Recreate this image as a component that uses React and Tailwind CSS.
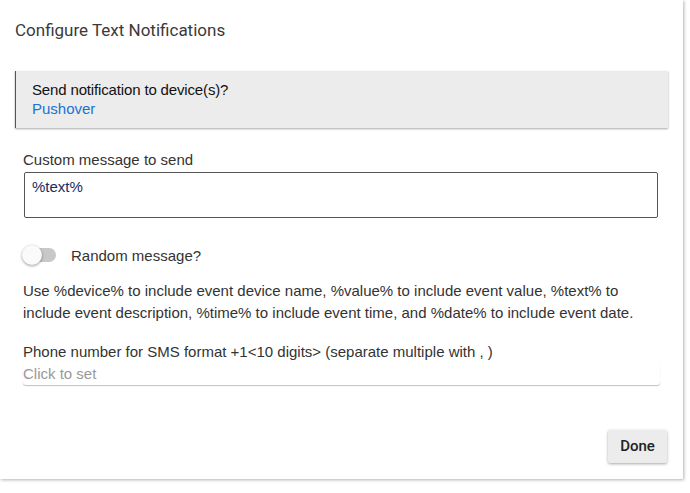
export default function App() {
  return (
    <div className="w-[690px] h-[493px] bg-white">
      <div className="w-[683px] h-[479px] bg-white shadow-[1px_1px_3px_rgba(0,0,0,0.3)] flex flex-col font-['Liberation_Sans',Arial,sans-serif]">
        <div className="pt-[20px] pl-[15px] h-[71px] font-['Roboto',sans-serif] text-[17px] text-[#3a3a3a] leading-[21px]">
          Configure Text Notifications
        </div>
        <div className="ml-[15px] w-[653px] h-[57px] bg-[#ececec] border-l border-l-[#555] shadow-[0_1px_2px_rgba(0,0,0,0.35)] pl-[16px] pt-[9px] text-[15px] leading-[19px]">
          <div className="text-[#111] tracking-[-0.15px]">Send notification to device(s)?</div>
          <div className="text-[#1a73d0]">Pushover</div>
        </div>
        <div className="pl-[23px] pt-[22px] text-[15px] leading-[19px] text-[#333]">Custom message to send</div>
        <div className="ml-[24px] mt-[3px] w-[634px] h-[46px] border border-[#555] rounded-[2px] px-[7px] pt-[4px] text-[15px] leading-[19px] text-[#1c2a5e]">
          %text%
        </div>
        <div className="flex items-center pl-[22px] mt-[27px] h-[20px]">
          <div className="relative w-[34px] h-[20px] flex items-center">
            <div className="ml-[4px] w-[30px] h-[14px] rounded-full bg-[#c8c8c8]"></div>
            <div className="absolute left-0 top-0 w-[20px] h-[20px] rounded-full bg-[#fafafa] shadow-[0_1px_3px_rgba(0,0,0,0.4)]"></div>
          </div>
          <div className="ml-[15px] text-[15px] text-[#333] leading-[19px]">Random message?</div>
        </div>
        <div className="pl-[23px] pr-[20px] mt-[15px] text-[15px] leading-[22px] text-[#333]">
          Use %device% to include event device name, %value% to include event value, %text% to include event description, %time% to include event time, and %date% to include event date.
        </div>
        <div className="pl-[23px] mt-[18px] text-[15px] leading-[19px] text-[#333]">
          Phone number for SMS format +1&lt;10 digits&gt; (separate multiple with , )
        </div>
        <div className="ml-[23px] w-[637px] h-[24px] pt-[3px] rounded-[3px] shadow-[0_1px_1px_rgba(0,0,0,0.25)] text-[15px] leading-[19px] text-[#999]">
          Click to set
        </div>
        <div className="flex-1"></div>
        <div className="flex justify-end pr-[16px] pb-[16px]">
          <div className="w-[59px] h-[33px] bg-[#ececec] shadow-[0_1px_3px_rgba(0,0,0,0.35)] rounded-[2px] flex items-center justify-center font-['Roboto',sans-serif] font-medium text-[15px] text-[#222]">
            Done
          </div>
        </div>
      </div>
    </div>
  );
}
